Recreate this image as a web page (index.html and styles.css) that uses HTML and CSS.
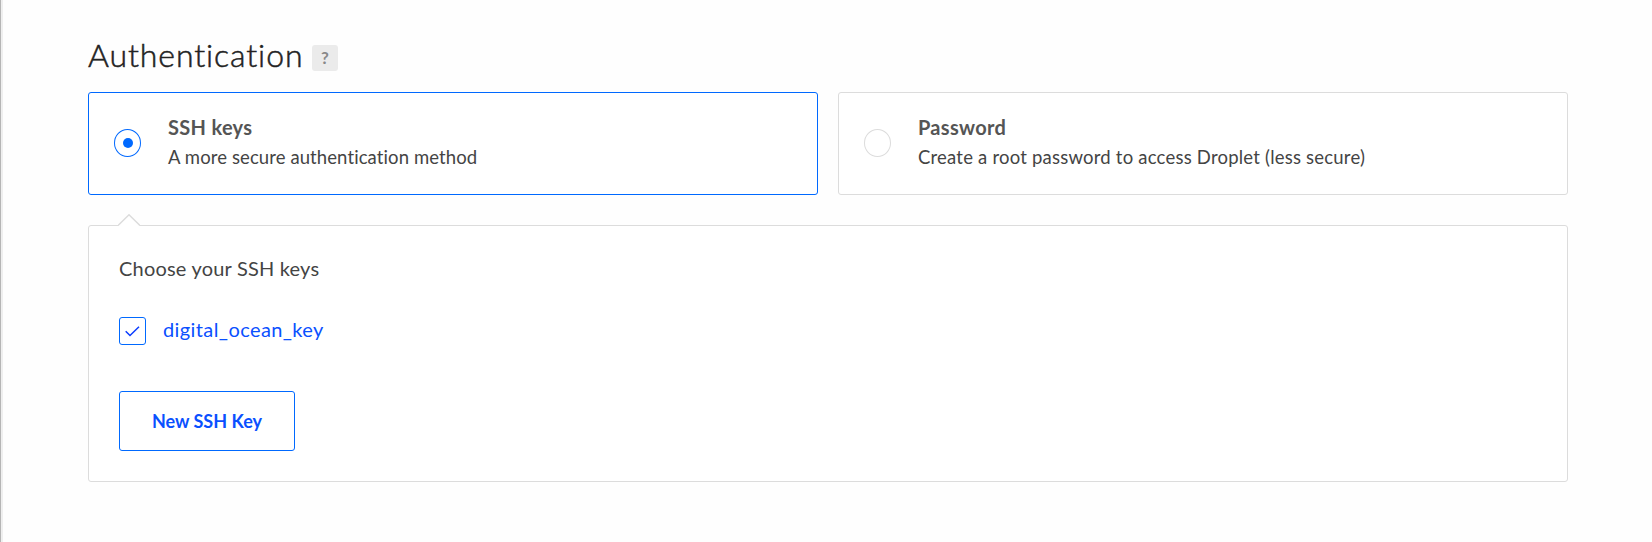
FILE: index.html
```html
<!DOCTYPE html>
<html lang="en">
<head>
<meta charset="utf-8">
<title>Authentication</title>
<link rel="stylesheet" href="styles.css">
</head>
<body>
<main class="page">
  <header class="heading">
    <h1 class="title">Authentication</h1>
    <span class="help">?</span>
  </header>
  <div class="options">
    <label class="option selected">
      <span class="radio"></span>
      <span class="copy">
        <strong class="name">SSH keys</strong>
        <span class="desc">A more secure authentication method</span>
      </span>
    </label>
    <label class="option">
      <span class="radio"></span>
      <span class="copy">
        <strong class="name">Password</strong>
        <span class="desc wide">Create a root password to access Droplet (less secure)</span>
      </span>
    </label>
  </div>
  <section class="panel">
    <svg class="notch" width="22" height="12" viewBox="0 0 22 12"><path d="M0 12 11 1 22 12Z" fill="#fff"/><path d="M0 11.5 11 .8 22 11.5" fill="none" stroke="#dcdcdc" stroke-width="1.5"/></svg>
    <p class="prompt">Choose your SSH keys</p>
    <label class="key">
      <span class="checkbox"><svg width="15" height="11" viewBox="0 0 15 11"><path d="M.7 5.2 5 9.5 14 .8" fill="none" stroke="#0a3cff" stroke-width="1.5"/></svg></span>
      <span class="key-name">digital_ocean_key</span>
    </label>
    <button class="new-key" type="button">New SSH Key</button>
  </section>
</main>
</body>
</html>
```
FILE: styles.css
```css
* { box-sizing: border-box; margin: 0; padding: 0; }
html { background: #fefefe; }
body {
  height: 542px;
  overflow: hidden;
  background: #fefefe;
  border-left: 1px solid #b5b5b5;
  box-shadow: inset 2px 0 #efefef;
  color: #444;
  font-family: Lato, "Open Sans", sans-serif;
}
.page { padding: 36px 84px 0 87px; }
.heading { display: flex; align-items: flex-start; height: 56px; }
.title { font-size: 32px; font-weight: 300; line-height: 38px; letter-spacing: .9px; color: #222; width: 224px; white-space: nowrap; -webkit-text-stroke: .5px #222; }
.help {
  width: 26px; height: 26px; margin-top: 9px;
  border-radius: 3px; background: #ebebeb; color: #888;
  font-size: 17px; font-weight: 700; line-height: 26px; text-align: center;
}
.options { display: grid; grid-template-columns: 1fr 1fr; gap: 20px; }
.option {
  display: flex; align-items: flex-start; height: 103px; padding: 21px 0 0 25px;
  border: 1px solid #dcdcdc; border-radius: 3px; background: #fff;
}
.option.selected { border-color: #0069ff; }
.radio {
  display: grid; place-items: center; width: 27px; height: 28px; margin: 15px 27px 0 0;
  border: 1px solid #dcdcdc; border-radius: 50%;
}
.selected .radio { border-color: #0069ff; }
.selected .radio::after { content: ""; width: 10px; height: 10px; border-radius: 50%; background: #0069ff; }
.copy { display: flex; flex-direction: column; white-space: nowrap; }
.name { font-size: 20px; line-height: 26px; letter-spacing: .3px; color: #555; }
.desc { margin-top: 1px; font-size: 18.5px; line-height: 32px; letter-spacing: .1px; }
.desc.wide { letter-spacing: .21px; }
.panel {
  position: relative; height: 257px; margin-top: 30px; padding: 28px 30px;
  border: 1px solid #dcdcdc; border-radius: 3px; background: #fff;
}
.notch { position: absolute; left: 29px; top: -12px; }
.prompt { font-size: 20px; line-height: 28px; letter-spacing: .2px; }
.key { display: flex; align-items: center; height: 28px; margin-top: 35px; color: #0a50ff; }
.checkbox { display: grid; place-items: center; width: 27px; height: 28px; border: 1px solid #0069ff; border-radius: 3px; }
.key-name { margin: -4px 0 0 17px; font-size: 20px; line-height: 28px; letter-spacing: .4px; }
.new-key {
  display: block; width: 176px; height: 60px; margin-top: 46px;
  border: 1px solid #0069ff; border-radius: 3px; background: #fff; color: #0a50ff;
  font: 700 18px Lato, "Open Sans", sans-serif;
}
```
